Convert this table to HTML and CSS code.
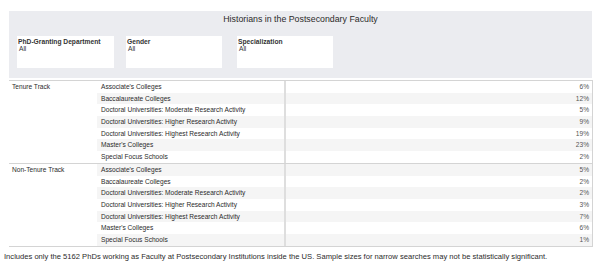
FILE: index.html
```html
<!DOCTYPE html>
<html>
<head>
<meta charset="utf-8">
<link rel="stylesheet" href="styles.css">
</head>
<body>
<div class="page">
  <div class="header">
    <div class="title">Historians in the Postsecondary Faculty</div>
    <div class="filters">
      <div class="filter f1"><div class="flabel">PhD-Granting Department</div><div class="fvalue">All</div></div>
      <div class="filter f2"><div class="flabel">Gender</div><div class="fvalue">All</div></div>
      <div class="filter f3"><div class="flabel">Specialization</div><div class="fvalue">All</div></div>
    </div>
  </div>
  <div class="table">
    <div class="group">
      <div class="glabel">Tenure Track</div>
      <div class="rows">
        <div class="row"><div class="name">Associate's Colleges</div><div class="val">6%</div></div>
        <div class="row alt"><div class="name">Baccalaureate Colleges</div><div class="val">12%</div></div>
        <div class="row"><div class="name">Doctoral Universities: Moderate Research Activity</div><div class="val">5%</div></div>
        <div class="row alt"><div class="name">Doctoral Universities: Higher Research Activity</div><div class="val">9%</div></div>
        <div class="row"><div class="name">Doctoral Universities: Highest Research Activity</div><div class="val">19%</div></div>
        <div class="row alt"><div class="name">Master's Colleges</div><div class="val">23%</div></div>
        <div class="row"><div class="name">Special Focus Schools</div><div class="val">2%</div></div>
      </div>
    </div>
    <div class="group">
      <div class="glabel">Non-Tenure Track</div>
      <div class="rows">
        <div class="row alt"><div class="name">Associate's Colleges</div><div class="val">5%</div></div>
        <div class="row"><div class="name">Baccalaureate Colleges</div><div class="val">2%</div></div>
        <div class="row alt"><div class="name">Doctoral Universities: Moderate Research Activity</div><div class="val">2%</div></div>
        <div class="row"><div class="name">Doctoral Universities: Higher Research Activity</div><div class="val">3%</div></div>
        <div class="row alt"><div class="name">Doctoral Universities: Highest Research Activity</div><div class="val">7%</div></div>
        <div class="row"><div class="name">Master's Colleges</div><div class="val">6%</div></div>
        <div class="row alt"><div class="name">Special Focus Schools</div><div class="val">1%</div></div>
      </div>
    </div>
  </div>
  <div class="footer">Includes only the 5162 PhDs working as Faculty at Postsecondary Institutions inside the US. Sample sizes for narrow searches may not be statistically significant.</div>
</div>
</body>
</html>
```
FILE: styles.css
```css
html, body {
  margin: 0;
  padding: 0;
  background: #ffffff;
}
body {
  font-family: "Liberation Sans", Arial, sans-serif;
  color: #333333;
}
.page {
  width: 600px;
  height: 267px;
  overflow: hidden;
}
.header {
  margin: 11px 0 0 9px;
  width: 583px;
  height: 67px;
  background: #ebecf0;
  box-sizing: border-box;
  padding-top: 3px;
}
.title {
  text-align: center;
  font-size: 8.8px;
  line-height: 10px;
  color: #2b2b2b;
}
.filters {
  display: flex;
  margin-top: 12px;
  padding-left: 8px;
}
.filter {
  background: #ffffff;
  height: 32px;
  box-sizing: border-box;
  padding: 2px 0 0 1px;
}
.f1 { width: 97px; }
.f2 { width: 96px; margin-left: 12px; }
.f3 { width: 96px; margin-left: 15px; }
.flabel {
  font-weight: bold;
  font-size: 6.7px;
  line-height: 7px;
  color: #333;
}
.fvalue {
  font-size: 6.6px;
  line-height: 7px;
  padding-left: 1px;
  color: #333;
}
.table {
  margin: 2px 0 0 9px;
  width: 584px;
  border-top: 1px solid #d4d4d4;
  border-right: 1px solid #d4d4d4;
  border-bottom: 1px solid #d4d4d4;
  box-sizing: border-box;
}
.group {
  display: flex;
}
.group + .group {
  border-top: 1px solid #d4d4d4;
}
.glabel {
  width: 88px;
  padding-left: 3px;
  box-sizing: border-box;
  font-size: 6.6px;
  line-height: 11.7px;
  color: #2b2b2b;
}
.rows {
  flex: 1;
}
.row {
  display: flex;
  height: 11.7px;
  font-size: 6.6px;
  line-height: 11.7px;
}
.row.alt {
  background: #f5f5f5;
}
.name {
  width: 189px;
  padding-left: 4px;
  box-sizing: border-box;
  border-right: 2px solid #dedede;
  white-space: nowrap;
  color: #2b2b2b;
}
.val {
  flex: 1;
  text-align: right;
  padding-right: 3px;
  color: #555555;
}
.footer {
  margin: 5px 0 0 4px;
  font-size: 7.6px;
  line-height: 9px;
  white-space: nowrap;
  color: #2b2b2b;
}
```
